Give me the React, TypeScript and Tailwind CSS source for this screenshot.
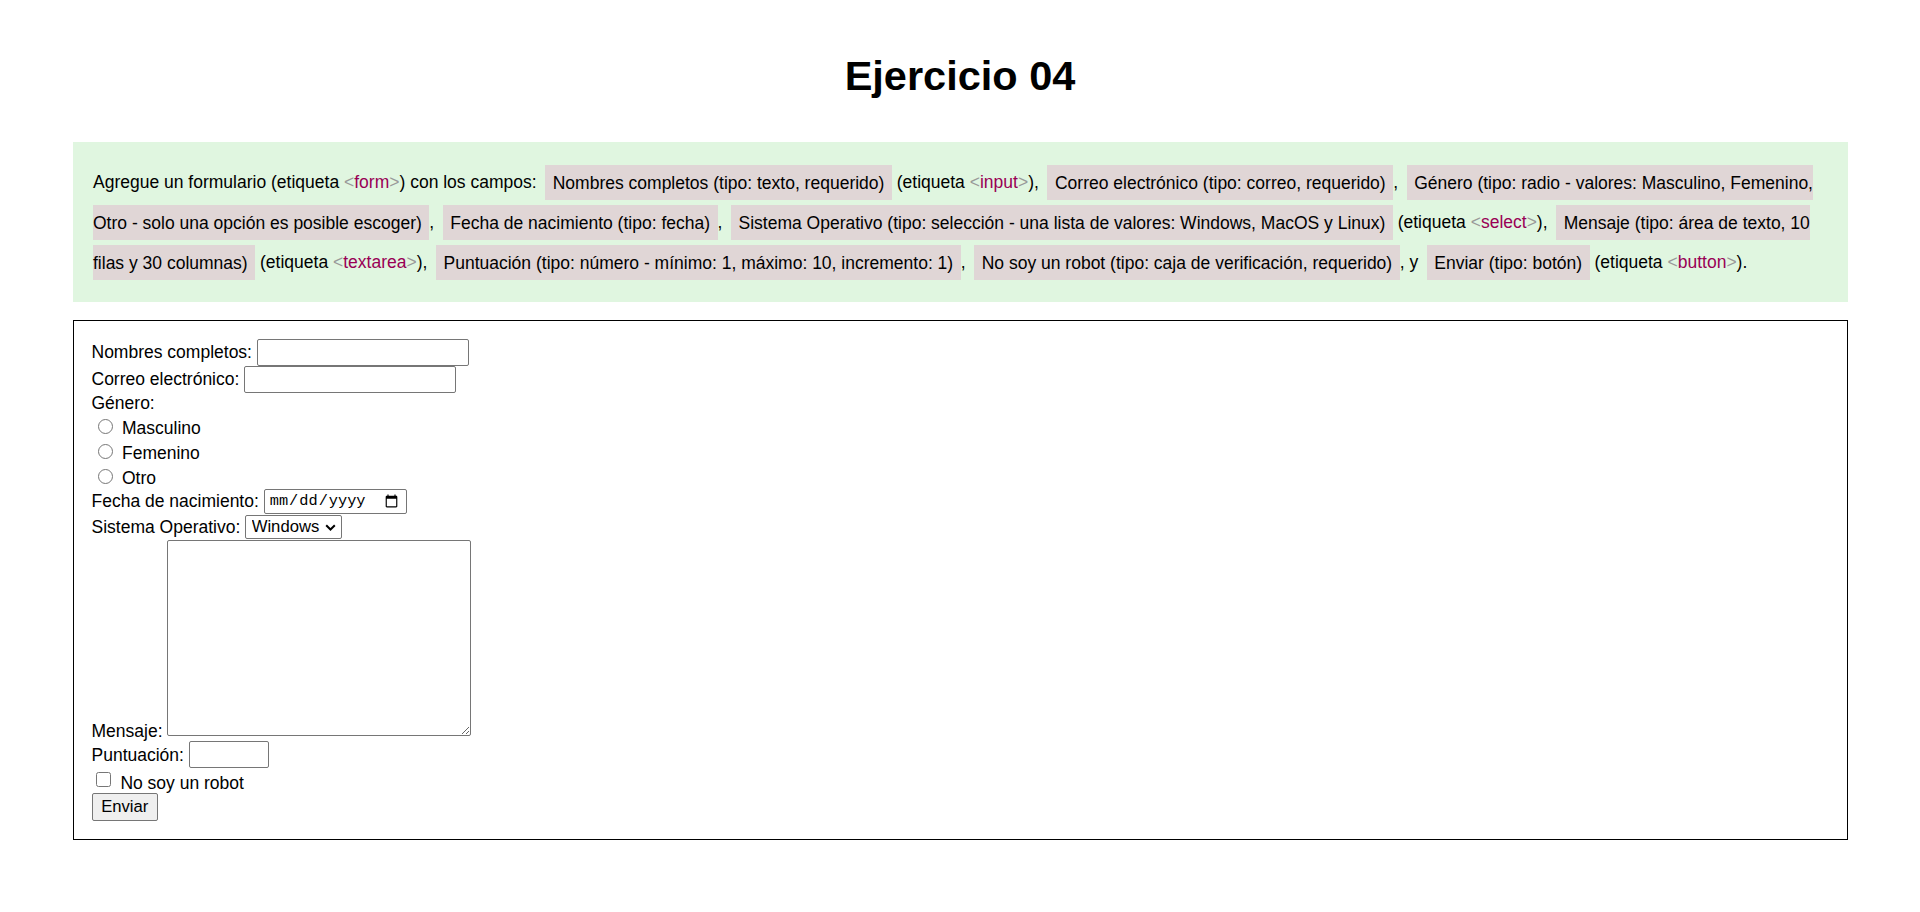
import React from "react";

function Tag({ name }: { name: string }) {
  return (
    <>
      <span className="text-[#999999]">&lt;</span>
      <span className="text-[#990055]">{name}</span>
      <span className="text-[#999999]">&gt;</span>
    </>
  );
}

function G({ children }: { children: React.ReactNode }) {
  return <span className="ml-[3.75px] bg-[#e0d6d6] px-[7.5px] py-[7.5px]">{children}</span>;
}

export default function App() {
  return (
    <div className="min-h-screen bg-white font-['Liberation_Sans',Arial,sans-serif] text-black">
      <h1 className="pt-[52px] text-center text-[41.5px] font-bold leading-[47px]">Ejercicio 04</h1>

      <section className="ml-[73px] mr-[72px] mt-[43px] bg-[#e0f6e0] p-[20px] text-[17.5px] leading-[40px]">
        Agregue un formulario (etiqueta <Tag name="form" />) con los campos:{" "}
        <G>Nombres completos (tipo: texto, requerido)</G> (etiqueta <Tag name="input" />),{" "}
        <G>Correo electrónico (tipo: correo, requerido)</G>,{" "}
        <G>Género (tipo: radio - valores: Masculino, Femenino, Otro - solo una opción es posible escoger)</G>,{" "}
        <G>Fecha de nacimiento (tipo: fecha)</G>,{" "}
        <G>Sistema Operativo (tipo: selección - una lista de valores: Windows, MacOS y Linux)</G> (etiqueta{" "}
        <Tag name="select" />),{" "}
        <G>Mensaje (tipo: área de texto, 10 filas y 30 columnas)</G> (etiqueta <Tag name="textarea" />),{" "}
        <G>Puntuación (tipo: número - mínimo: 1, máximo: 10, incremento: 1)</G>,{" "}
        <G>No soy un robot (tipo: caja de verificación, requerido)</G>, y <G>Enviar (tipo: botón)</G> (etiqueta{" "}
        <Tag name="button" />).
      </section>

      <form
        className="ml-[73px] mr-[72px] mt-[18px] border border-black p-[17.5px] text-[17.5px] leading-[20px]"
        onSubmit={(e) => e.preventDefault()}
      >
        <div className="flex h-[27px] items-center">
          <label htmlFor="nombres">Nombres completos:</label>
          <input
            id="nombres"
            type="text"
            required
            className="ml-[4.9px] h-[27px] w-[212px] rounded-[2px] border border-[#767676] bg-white px-[3px] text-[16.67px]"
          />
        </div>
        <div className="flex h-[27px] items-center">
          <label htmlFor="correo">Correo electrónico:</label>
          <input
            id="correo"
            type="email"
            required
            className="ml-[4.9px] h-[27px] w-[212px] rounded-[2px] border border-[#767676] bg-white px-[3px] text-[16.67px]"
          />
        </div>
        <div className="flex h-[20px] items-end">Género:</div>
        {["Masculino", "Femenino", "Otro"].map((g) => (
          <div key={g} className="flex h-[25px] items-end">
            <input
              type="radio"
              name="genero"
              value={g}
              className="mb-[3.5px] ml-[6px] h-[15px] w-[15px]"
            />
            <span className="ml-[9.5px]">{g}</span>
          </div>
        ))}
        <div className="flex h-[27.5px] items-center">
          <label htmlFor="fecha">Fecha de nacimiento:</label>
          <input
            id="fecha"
            type="date"
            className="ml-[4.9px] h-[25px] w-[143.4px] rounded-[2px] border border-[#767676] bg-white pl-[4px] pr-[5px] font-['Liberation_Mono',monospace] text-[15.3px]"
          />
        </div>
        <div className="flex h-[24px] items-center">
          <label htmlFor="so">Sistema Operativo:</label>
          <span className="relative ml-[4.9px] flex">
            <select
              id="so"
              className="h-[24px] w-[96.4px] appearance-none rounded-[2px] border border-[#767676] bg-white pl-[5.5px] text-[16.67px] leading-[20px]"
            >
              <option>Windows</option>
              <option>MacOS</option>
              <option>Linux</option>
            </select>
            <svg
              className="pointer-events-none absolute right-[6px] top-[9px]"
              width="11"
              height="7"
              viewBox="0 0 11 7"
              fill="none"
            >
              <path d="M1.2 1.2 L5.5 5.5 L9.8 1.2" stroke="#000" strokeWidth="2" />
            </svg>
          </span>
        </div>
        <div className="flex h-[202px] items-end">
          <label htmlFor="mensaje">Mensaje:</label>
          <textarea
            id="mensaje"
            rows={10}
            cols={30}
            className="mb-[5px] ml-[4.9px] h-[196px] w-[304px] rounded-[2px] border border-[#767676] bg-white"
          />
        </div>
        <div className="flex h-[27px] items-center">
          <label htmlFor="punt">Puntuación:</label>
          <input
            id="punt"
            type="number"
            min={1}
            max={10}
            step={1}
            className="ml-[4.9px] h-[27.3px] w-[80px] rounded-[2px] border border-[#767676] bg-white px-[3px] text-[16.67px]"
          />
        </div>
        <div className="flex h-[25px] items-end">
          <input type="checkbox" required className="mb-[6.3px] ml-[4.5px] h-[14.5px] w-[14.5px]" />
          <span className="ml-[9.9px]">No soy un robot</span>
        </div>
        <div className="flex h-[28px] items-start">
          <button
            type="submit"
            className="h-[27.7px] w-[66.5px] rounded-[2px] border border-[#767676] bg-[#efefef] text-[16.67px] leading-[20px]"
          >
            Enviar
          </button>
        </div>
      </form>
    </div>
  );
}
